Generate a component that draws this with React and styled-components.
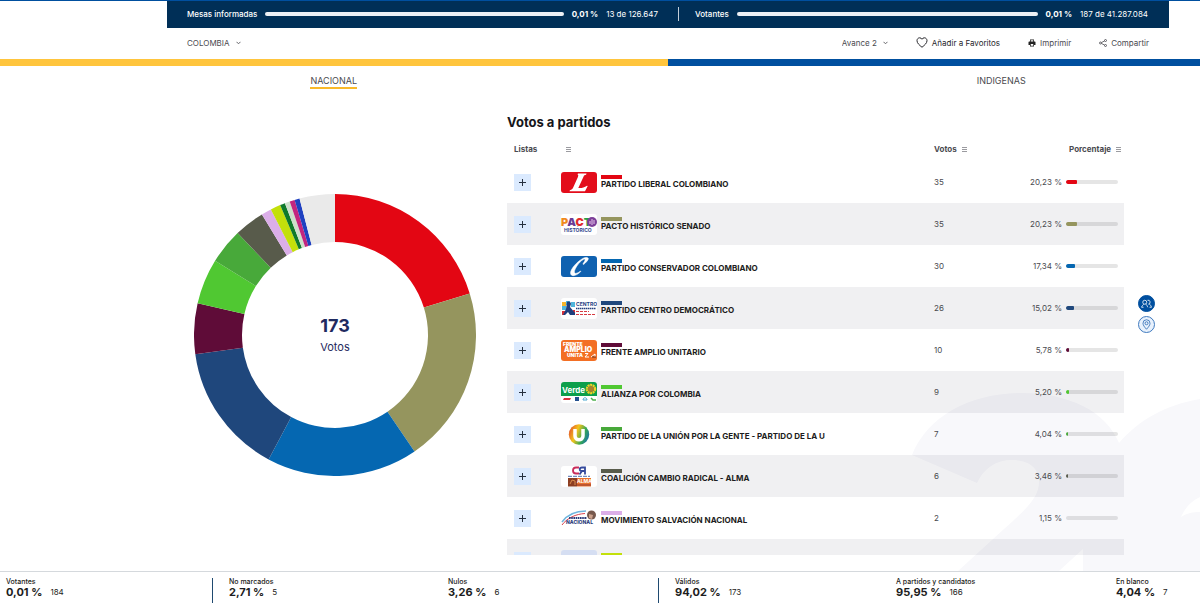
import React from "react";
import styled, { createGlobalStyle } from "styled-components";

const GlobalStyle = createGlobalStyle`
  *, *::before, *::after { box-sizing: border-box; }
  body {
    margin: 0;
    background: #fff;
    color: #4a4a4f;
    font-family: Inter, "Open Sans", sans-serif;
    font-size: 8px;
    line-height: 12px;
  }
  button, select { font: inherit; color: inherit; }
`;

const Page = styled.div`
  position: relative;
  display: flex;
  flex-direction: column;
  height: 100vh;
  overflow: hidden;
  border-top: 1px solid #004f9f;
`;

/* ---------- progress header ---------- */

const ProgressBar = styled.header`
  display: flex;
  align-items: center;
  height: 27px;
  margin: 0 31px 0 167px;
  padding: 0 21px 1px 20px;
  background: #002f57;
  color: #fff;
`;

const Progress = styled.div`
  display: flex;
  flex: ${(p) => p.$grow} 1 0;
  align-items: center;
  gap: 8px;
  white-space: nowrap;
`;

const ProgressLabel = styled.span`
  font-weight: 500;
`;

const ProgressTrack = styled.div`
  flex: 1;
  height: 4px;
  border-radius: 2px;
  background: #edf0f5;
`;

const ProgressPercent = styled.strong`
  font-weight: 700;
`;

const ProgressDivider = styled.div`
  width: 1px;
  height: 14px;
  margin: 0 16px 0 20px;
  background: #c3ced9;
`;

/* ---------- toolbar ---------- */

const Toolbar = styled.nav`
  display: flex;
  align-items: center;
  height: 31px;
  margin: 0 51px 0 187px;
  padding-bottom: 2px;
`;

const ToolbarActions = styled.div`
  display: flex;
  align-items: center;
  gap: 28px;
  margin-left: auto;
`;

const SelectBox = styled.label`
  display: flex;
  align-items: center;
  gap: 6px;
`;

const Select = styled.select`
  appearance: none;
  field-sizing: content;
  padding: 0;
  border: 0;
  background: transparent;
  line-height: 12px;
  cursor: pointer;
`;

const ToolButton = styled.button`
  display: flex;
  align-items: center;
  gap: 4px;
  padding: 0;
  border: 0;
  background: transparent;
  color: ${(p) => (p.$strong ? "#26262b" : "#4a4a4f")};
  cursor: pointer;
`;

const Flag = styled.div`
  display: flex;
  height: 7px;
  flex: none;
  background: #004f9f;

  &::before {
    content: "";
    width: 55.67%;
    background: #ffc53d;
  }
`;

/* ---------- tabs ---------- */

const Tabs = styled.div`
  display: grid;
  grid-template-columns: 1fr 1fr;
  flex: none;
  width: 111.25%;
  height: 24px;
  padding-top: 8px;
  justify-items: center;
`;

const Tab = styled.button`
  height: 15px;
  padding: 0;
  border: 0;
  border-bottom: 2px solid ${(p) => (p.$active ? "#f9b92a" : "transparent")};
  background: transparent;
  font-size: 9px;
  line-height: 13px;
  cursor: pointer;
`;

/* ---------- main area ---------- */

const Main = styled.main`
  position: relative;
  display: grid;
  grid-template-columns: 340fr 617fr 76fr;
  grid-template-rows: minmax(0, 1fr);
  flex: 1;
  min-height: 0;
  padding-left: 167px;
`;

const Watermark = styled.svg`
  position: absolute;
  right: 0;
  bottom: 0;
  width: 290px;
  height: 180px;
`;

const ChartColumn = styled.section`
  display: grid;
  place-items: center;
  padding: 8px 4px 0 0;
`;

const DonutBox = styled.div`
  display: grid;
  place-items: center;
  width: 282px;

  > * { grid-area: 1 / 1; }
`;

const DonutCaption = styled.div`
  padding-top: 2px;
  text-align: center;
  color: #1f2a60;
`;

const DonutTotal = styled.div`
  font-size: 18px;
  line-height: 22px;
  font-weight: 700;
`;

const DonutUnit = styled.div`
  font-size: 11px;
  line-height: 20px;
`;

const Panel = styled.section`
  position: relative;
  display: flex;
  flex-direction: column;
  min-height: 0;
  padding-bottom: 16px;
`;

const PanelTitle = styled.h2`
  margin: 0;
  padding: 24px 0 7px;
  color: #16161a;
  font-size: 13px;
  line-height: 16px;
  font-weight: 700;
`;

const ListScroll = styled.div`
  flex: 1;
  min-height: 0;
  overflow-y: auto;
  scrollbar-width: none;
`;

const Table = styled.table`
  width: 100%;
  table-layout: fixed;
  border-collapse: collapse;
`;

const HeadCell = styled.th`
  width: ${(p) => p.$width || "auto"};
  height: 24px;
  padding: 0 3px 0 ${(p) => p.$indent || 0}px;
  text-align: ${(p) => p.$align || "left"};
  font-weight: 700;
  color: #4a4a4f;

  svg { margin-left: ${(p) => p.$iconGap || 0}px; vertical-align: -1px; }
`;

const Row = styled.tr`
  height: 42px;
  background: ${(p) => (p.$shaded ? "rgba(10, 10, 40, 0.064)" : "transparent")};
`;

const Cell = styled.td`
  padding: 0 0 0 ${(p) => p.$indent || 0}px;
  font-size: 8px;
`;

const Expand = styled.button`
  display: grid;
  place-items: center;
  width: 17px;
  height: 17px;
  padding: 0;
  border: 0;
  background: #dbeafe;
  color: #25303f;
  cursor: pointer;
`;

const Party = styled.div`
  display: flex;
  align-items: center;
  gap: 4px;
`;

const PartyName = styled.div`
  height: 16px;
  padding-top: 1px;
  color: #1c1c20;
  font-weight: 700;
  line-height: 10px;
  white-space: nowrap;

  &::before {
    content: "";
    display: block;
    width: 21px;
    height: 4px;
    background: ${(p) => p.$color};
  }
`;

const Share = styled.div`
  display: flex;
  align-items: center;
  justify-content: flex-end;
  gap: 4px;
  padding-right: 6px;
`;

const ShareTrack = styled.div`
  width: 52px;
  height: 4px;
  border-radius: 2px;
  overflow: hidden;
  background: rgba(0, 0, 0, 0.1);
`;

const ShareFill = styled.div`
  height: 100%;
  border-radius: 1px;
  background: ${(p) => p.$color};
`;

const SideActions = styled.aside`
  position: relative;
  display: flex;
  flex-direction: column;
  align-self: center;
  gap: 4px;
  padding-left: 14px;
  margin-bottom: 33px;
`;

const RoundButton = styled.button`
  display: grid;
  place-items: center;
  width: 17px;
  height: 17px;
  padding: 0;
  border: 1px solid ${(p) => (p.$filled ? "#004f9f" : "#3f7abf")};
  border-radius: 50%;
  background: ${(p) => (p.$filled ? "#004f9f" : "#e8f1fc")};
  color: ${(p) => (p.$filled ? "#fff" : "#1c5fae")};
  cursor: pointer;
`;

/* ---------- footer ---------- */

const Summary = styled.footer`
  position: relative;
  display: grid;
  grid-template-columns: 212fr 230fr 216fr 232fr 220fr 90fr;
  flex: none;
  height: 33px;
  padding-top: 6px;
  border-top: 1px solid #d5d9dd;
  background: #fff;
`;

const Stat = styled.div`
  height: 25px;
  padding-left: ${(p) => (p.$divided ? 16 : 6)}px;
  border-left: ${(p) => (p.$divided ? "1px solid #1f4a70" : "0")};
  color: #1c1c20;
  white-space: nowrap;
`;

const StatLabel = styled.div`
  font-size: 7px;
  line-height: 8px;
  font-weight: 500;
`;

const StatValues = styled.div`
  display: flex;
  align-items: center;
  gap: 8px;
  line-height: 12px;
`;

const StatPercent = styled.strong`
  font-size: 11px;
  font-weight: 700;
`;

/* ---------- icons ---------- */

const Chevron = () => (
  <svg width="5" height="4" viewBox="0 0 5 4" fill="none" stroke="#66666b" aria-hidden="true">
    <path d="M.5 .8 2.5 2.8 4.5 .8" />
  </svg>
);

const Heart = () => (
  <svg width="12" height="11" viewBox="0 0 24 22" fill="none" stroke="#26262b" strokeWidth="2" strokeLinejoin="round" aria-hidden="true">
    <path d="M12 20.500C7 16.500 2 12.300 2 7.400 2 4 4.400 1.600 7.300 1.600c2 0 3.700 1 4.700 2.900 1-1.900 2.700-2.900 4.700-2.900C19.600 1.600 22 4 22 7.400c0 4.900-5 9.100-10 13.100Z" />
  </svg>
);

const Printer = () => (
  <svg width="8" height="8" viewBox="0 0 16 16" aria-hidden="true">
    <path fill="#222" d="M4 1h8v4h1.500A1.500 1.500 0 0 1 15 6.500V12h-3v3H4v-3H1V6.500A1.500 1.500 0 0 1 2.500 5H4Z" />
    <path fill="#fff" d="M5.500 2.500h5V5h-5zM5.500 10h5v3.500h-5z" />
  </svg>
);

const ShareIcon = () => (
  <svg width="8" height="8" viewBox="0 0 16 16" fill="none" stroke="#3c3c41" strokeWidth="1.500" aria-hidden="true">
    <circle cx="3" cy="8" r="2" />
    <circle cx="13" cy="3" r="2" />
    <circle cx="13" cy="13" r="2" />
    <path d="M5 7l6-3M5 9l6 3" />
  </svg>
);

const SortIcon = () => (
  <svg width="5" height="6" viewBox="0 0 5 6" fill="#9b9ba0" aria-hidden="true">
    <path d="M0 0h5v1H0zM0 2h5v1H0zM0 4h5v1H0z" />
  </svg>
);

const Plus = () => (
  <svg width="7" height="7" viewBox="0 0 7 7" fill="none" stroke="currentColor" aria-hidden="true">
    <path d="M3.500 0v7M0 3.500h7" />
  </svg>
);

const People = () => (
  <svg width="11" height="9" viewBox="0 0 22 18" fill="none" stroke="currentColor" strokeWidth="1.600" aria-hidden="true">
    <circle cx="7.500" cy="6.500" r="4" />
    <path d="M1 16.500c1-2.500 3-5 4.500-6M9.500 10c1.500 1 3 3.500 4 6.500M1 16.500h4M13 2.600a4 4 0 1 1 1.500 7.800M16.500 10c2 1 3.500 3.500 4.500 6.500h-4" />
  </svg>
);

const Pin = () => (
  <svg width="9" height="11" viewBox="0 0 18 22" fill="none" stroke="currentColor" strokeWidth="1.500" aria-hidden="true">
    <path d="M9 20.500C5 16 2 12.500 2 8.500a7 7 0 0 1 14 0c0 4-3 7.500-7 12Z" />
    <circle cx="9" cy="8.500" r="3" />
  </svg>
);

/* ---------- party logos ---------- */

const LogoSvg = styled.svg`
  flex: none;
  width: 36px;
  height: 21px;
  border-radius: 3px;
  background: ${(p) => p.$bg || "#fff"};
`;

const Logo = ({ bg, children }) => (
  <LogoSvg $bg={bg} viewBox="0 0 36 21" fontFamily="Inter, sans-serif" fontWeight="800" aria-hidden="true">
    {children}
  </LogoSvg>
);

const LiberalLogo = () => (
  <Logo bg="#e30d1b">
    <path fill="#fff" d="M17 1.500h8.500l-.4 1.200c-1.500.1-2 .6-2.600 2L17.300 16c2.700.4 5.700-.2 8.700-2.300l.7.300-2.700 5.200H8.500l.4-1c1.700-.5 2.600-1.200 3.400-3l4.500-10c.7-1.700.6-2.300-.3-2.700Z" />
  </Logo>
);

const PactoLogo = () => (
  <Logo>
    <text x="0" y="12" fontSize="11" fontWeight="900">
      <tspan fill="#f08a1d">P</tspan>
      <tspan fill="#6a3a94">A</tspan>
      <tspan fill="#e22b2d">C</tspan>
      <tspan fill="#24a148">T</tspan>
    </text>
    <circle cx="31" cy="8" r="5" fill="#7c3f98" />
    <path d="M29 10V7m2 4V5m2 5V6" stroke="#e7c9ee" fill="none" />
    <text x="3" y="18" fontSize="5" fontWeight="700" fill="#34488c">HISTÓRICO</text>
  </Logo>
);

const ConservadorLogo = () => (
  <Logo bg="#0f61b0">
    <path fill="#fff" d="M27 2c-1-.9-3-.8-5.200.5C16 5.700 9.500 13 9.600 17c0 4 5.400 3.400 10.200-1.500l-.3-.5c-3.300 2.800-6.300 3.300-6.100.7.200-3.300 5.200-10.200 8.800-12.200 1.800-1 2.500-.1 1.500 1.600l-1.800 3 .7.300c2.400-1.700 5.700-5.300 4.400-6.400Z" stroke="#fff" strokeWidth=".6" />
  </Logo>
);

const CentroLogo = () => (
  <Logo>
    <path fill="#f7b52b" d="M1 4h4v4H1z" />
    <path fill="#4fb5dc" d="M5 3h4v4H5zM1 8h4v4H1zM10 4h4v5h-4z" />
    <path fill="#d62f38" d="M1 13h3v4H1zM12 12h2v4h-2z" />
    <path fill="#203f7e" d="M6 4c2-1 4 0 4 2l-1 3 5 6v2H9l-2-3-3 3H2l3-6Z" />
    <text x="15" y="8" fontSize="5" fontWeight="700" fill="#25407f">CENTRO</text>
    <path stroke="#25407f" strokeWidth="1.500" strokeDasharray="1.500 .5" d="M15 10.500h20" />
    <path stroke="#d63a42" strokeDasharray="3 1" d="M15 13.500h13M15 16.500h20" />
  </Logo>
);

const FrenteLogo = () => (
  <Logo bg="#f36f24">
    <g fill="#fff" fontWeight="900">
      <text x="2" y="6" fontSize="5">FRENTE</text>
      <text x="3" y="12" fontSize="7">AMPLIO</text>
      <text x="6" y="17" fontSize="5">UNITA</text>
    </g>
    <path d="M24 13.500h3l-3 3.500h4M30 17l4-3v3" stroke="#fff" fill="none" />
    <path d="M31 17h4" stroke="#693421" fill="none" />
  </Logo>
);

const VerdeLogo = () => (
  <Logo>
    <path fill="#0c9f4b" d="M0 0h36v14H0z" />
    <text x="1" y="11" fontSize="8" fontWeight="700" fill="#fff">Verde</text>
    <circle cx="30" cy="7" r="4" fill="none" stroke="#f2cf25" strokeWidth="2.500" strokeDasharray="2 .5" />
    <circle cx="30" cy="7" r="3" fill="#a8812c" />
    <path fill="#d7333b" d="M3 16h7l-1 2H2z" />
    <path fill="#25508f" d="M14 15h4v4h-4z" />
    <path d="M22 18c0-3 4-3 4 0z" fill="none" stroke="#4aa7d0" />
    <path d="M30 16l2 2h3" fill="none" stroke="#4bae4b" strokeWidth="1.500" />
  </Logo>
);

const ULogo = () => (
  <Logo>
    <defs>
      <linearGradient id="u-ring" x1="0" y1=".3" x2="1" y2=".7">
        <stop offset="0" stopColor="#e4572b" />
        <stop offset=".35" stopColor="#f3c41c" />
        <stop offset=".7" stopColor="#36a853" />
        <stop offset="1" stopColor="#1670ac" />
      </linearGradient>
    </defs>
    <circle cx="18" cy="10.500" r="10.200" fill="url(#u-ring)" />
    <path fill="none" stroke="#fff" strokeWidth="3.500" d="M14 5v7c0 5 8 5 8 0V5" />
  </Logo>
);

const CambioLogo = () => (
  <Logo>
    <g fill="none" strokeWidth="1.800">
      <path stroke="#c92d5b" d="M18 1.500h-3c-4 0-4 6 0 6h3" />
      <path stroke="#354a9c" d="M24 8.500V1.500h-3c-3 0-3 3.500 0 3.500h3M21 5 18.500 8.500" />
    </g>
    <path stroke="#4f6fae" strokeDasharray="4 1" d="M7 10.300h22" />
    <path fill="#8c3e22" d="M7 12h9v8.500H7z" />
    <path fill="#e8702c" d="M16 12h14v8.500H16z" />
    <path fill="none" stroke="#d98a4e" d="M9 18l2-4 3 1v4" />
    <text x="16" y="17" fontSize="5" fontWeight="700" fill="#fff">ALMA</text>
    <path stroke="#933a31" d="M16 19h14" />
  </Logo>
);

const SalvacionLogo = () => (
  <Logo>
    <g fill="none">
      <path stroke="#70b6df" strokeWidth="1.500" d="M1 14C6 7 14 3 25 3" />
      <path stroke="#d9434d" d="M1 17C6 10 15 6 24 5.500" />
    </g>
    <circle cx="30.500" cy="7" r="4.500" fill="#76584c" />
    <path fill="#caa08b" d="M28 6l4 1-1 4-3-1Z" />
    <path stroke="#2b3b7a" strokeWidth="1.800" strokeDasharray="1.600 .6" d="M8 10h18" />
    <text x="5" y="16" fontSize="5" fill="#2b3b7a">NACIONAL</text>
  </Logo>
);

const BlankLogo = () => <Logo bg="#d5def2" />;

/* ---------- data ---------- */

const parties = [
  { name: "PARTIDO LIBERAL COLOMBIANO", votes: 35, share: "20,23", color: "#e30613", logo: LiberalLogo },
  { name: "PACTO HISTÓRICO SENADO", votes: 35, share: "20,23", color: "#95955e", logo: PactoLogo },
  { name: "PARTIDO CONSERVADOR COLOMBIANO", votes: 30, share: "17,34", color: "#0567b1", logo: ConservadorLogo },
  { name: "PARTIDO CENTRO DEMOCRÁTICO", votes: 26, share: "15,02", color: "#1f477c", logo: CentroLogo },
  { name: "FRENTE AMPLIO UNITARIO", votes: 10, share: "5,78", color: "#5f0c38", logo: FrenteLogo },
  { name: "ALIANZA POR COLOMBIA", votes: 9, share: "5,20", color: "#50c832", logo: VerdeLogo },
  { name: "PARTIDO DE LA UNIÓN POR LA GENTE - PARTIDO DE LA U", votes: 7, share: "4,04", color: "#48a93a", logo: ULogo },
  { name: "COALICIÓN CAMBIO RADICAL - ALMA", votes: 6, share: "3,46", color: "#585b4b", logo: CambioLogo },
  { name: "MOVIMIENTO SALVACIÓN NACIONAL", votes: 2, share: "1,15", color: "#dbaee8", logo: SalvacionLogo },
];

const slices = [
  ...parties.map(({ votes, color }) => ({ votes, color })),
  { votes: 2, color: "#c3e00b" },
  { votes: 1, color: "#0f7a2b" },
  { votes: 1, color: "#cde0cb" },
  { votes: 1, color: "#c3267f" },
  { votes: 1, color: "#1f41c1" },
  { votes: 7, color: "#eaeaea" },
];

const stats = [
  { label: "Votantes", percent: "0,01 %", count: "184" },
  { label: "No marcados", percent: "2,71 %", count: "5", divided: true },
  { label: "Nulos", percent: "3,26 %", count: "6" },
  { label: "Válidos", percent: "94,02 %", count: "173", divided: true },
  { label: "A partidos y candidatos", percent: "95,95 %", count: "166" },
  { label: "En blanco", percent: "4,04 %", count: "7" },
];

/* Shares below 2 % are too small to show in the bar. */
const barWidth = (share) => {
  const value = parseFloat(share.replace(",", "."));
  return value < 2 ? "0%" : `${value}%`;
};

const Donut = () => {
  const total = slices.reduce((sum, s) => sum + s.votes, 0);
  const point = (votes, r) => {
    const a = (votes / total) * 2 * Math.PI;
    return `${(141 + r * Math.sin(a)).toFixed(2)} ${(141 - r * Math.cos(a)).toFixed(2)}`;
  };
  let start = 0;
  return (
    <svg width="282" height="282" viewBox="0 0 282 282" role="img" aria-label="Votos a partidos">
      {slices.map((s) => {
        const from = start;
        const to = (start += s.votes);
        return (
          <path
            key={from}
            fill={s.color}
            d={`M${point(from, 141)}A141 141 0 0 1 ${point(to, 141)}L${point(to, 93)}A93 93 0 0 0 ${point(from, 93)}Z`}
          />
        );
      })}
    </svg>
  );
};

const ProgressItem = ({ label, count, grow }) => (
  <Progress $grow={grow}>
    <ProgressLabel>{label}</ProgressLabel>
    <ProgressTrack />
    <ProgressPercent>0,01 %</ProgressPercent>
    <span>{count}</span>
  </Progress>
);

export default function App() {
  return (
    <Page>
      <GlobalStyle />
      <ProgressBar>
        <ProgressItem label="Mesas informadas" count="13 de 126.647" grow={471} />
        <ProgressDivider />
        <ProgressItem label="Votantes" count="187 de 41.287.084" grow={453} />
      </ProgressBar>

      <Toolbar>
        <SelectBox>
          <Select aria-label="Territorio">
            <option>COLOMBIA</option>
          </Select>
          <Chevron />
        </SelectBox>
        <ToolbarActions>
          <SelectBox>
            <Select aria-label="Avance">
              <option>Avance 2</option>
            </Select>
            <Chevron />
          </SelectBox>
          <ToolButton $strong><Heart />Añadir a Favoritos</ToolButton>
          <ToolButton><Printer />Imprimir</ToolButton>
          <ToolButton><ShareIcon />Compartir</ToolButton>
        </ToolbarActions>
      </Toolbar>

      <Flag />

      <Tabs role="tablist">
        <Tab role="tab" aria-selected="true" $active>NACIONAL</Tab>
        <Tab role="tab" aria-selected="false">INDIGENAS</Tab>
      </Tabs>

      <Main>
        <Watermark viewBox="0 0 290 180" aria-hidden="true">
          <path
            fill="#f8f8fb"
            d="M2 64C18 24 62 2 112 2c46 0 84 18 97 50C229 29 255 14 290 8v98c-9 4-15 11-19 20 6-4 12-5 19-5v59H173v-22l-24 22H48l46-42c21-19 35-31 35-47 0-15-11-22-27-22-16 0-28 8-35 23Z"
          />
        </Watermark>

        <ChartColumn>
          <DonutBox>
            <Donut />
            <DonutCaption>
              <DonutTotal>173</DonutTotal>
              <DonutUnit>Votos</DonutUnit>
            </DonutCaption>
          </DonutBox>
        </ChartColumn>

        <Panel>
          <PanelTitle>Votos a partidos</PanelTitle>
          <ListScroll>
            <Table>
              <thead>
                <tr>
                  <HeadCell $width="54px" $indent={7}>Listas</HeadCell>
                  <HeadCell $indent={5}><SortIcon /></HeadCell>
                  <HeadCell $width="90px" $iconGap={3}>Votos <SortIcon /></HeadCell>
                  <HeadCell $width="100px" $align="right" $iconGap={3}>Porcentaje <SortIcon /></HeadCell>
                </tr>
              </thead>
              <tbody>
                {parties.map(({ name, votes, share, color, logo: PartyLogo }, i) => (
                  <Row key={name} $shaded={i % 2 === 1}>
                    <Cell $indent={7}>
                      <Expand aria-label={`Ver ${name}`}><Plus /></Expand>
                    </Cell>
                    <Cell>
                      <Party>
                        <PartyLogo />
                        <PartyName $color={color}>{name}</PartyName>
                      </Party>
                    </Cell>
                    <Cell>{votes}</Cell>
                    <Cell>
                      <Share>
                        {share} %
                        <ShareTrack>
                          <ShareFill $color={color} style={{ width: barWidth(share) }} />
                        </ShareTrack>
                      </Share>
                    </Cell>
                  </Row>
                ))}
                <Row $shaded>
                  <Cell $indent={7}><Expand aria-label="Ver lista"><Plus /></Expand></Cell>
                  <Cell>
                    <Party>
                      <BlankLogo />
                      <PartyName $color="#c3e00b" />
                    </Party>
                  </Cell>
                  <Cell />
                  <Cell />
                </Row>
              </tbody>
            </Table>
          </ListScroll>
        </Panel>

        <SideActions>
          <RoundButton $filled aria-label="Candidatos"><People /></RoundButton>
          <RoundButton aria-label="Mapa"><Pin /></RoundButton>
        </SideActions>
      </Main>

      <Summary>
        {stats.map((s) => (
          <Stat key={s.label} $divided={s.divided}>
            <StatLabel>{s.label}</StatLabel>
            <StatValues>
              <StatPercent>{s.percent}</StatPercent>
              <span>{s.count}</span>
            </StatValues>
          </Stat>
        ))}
      </Summary>
    </Page>
  );
}
